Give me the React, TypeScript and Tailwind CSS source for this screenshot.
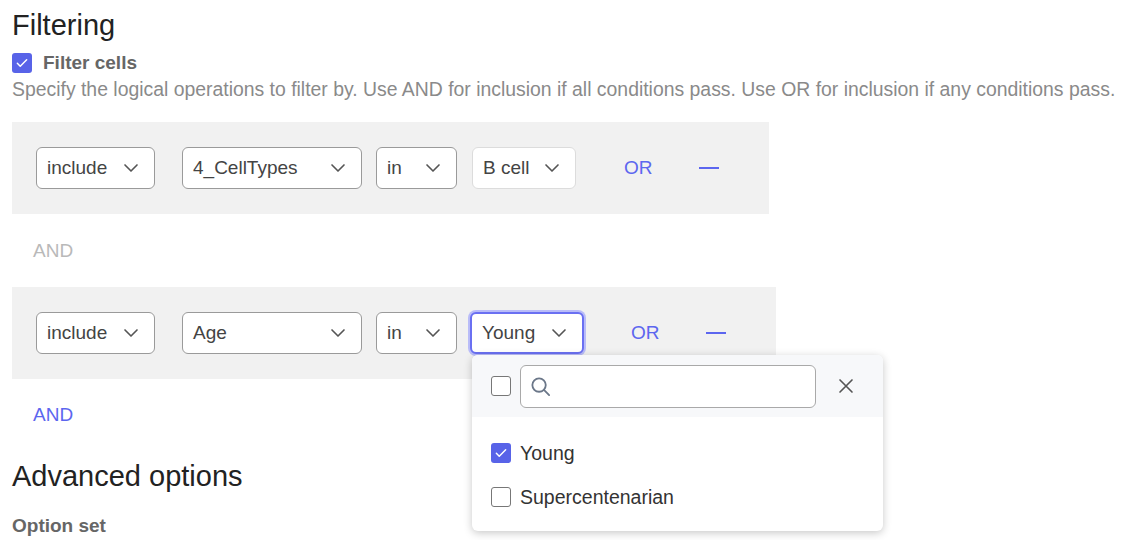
import { useState } from "react";

type Cond = { mode: string; field: string; op: string; value: string };

const font = { fontFamily: '"Liberation Sans", Arial, sans-serif' };

function Chevron() {
  return (
    <svg width="18" height="18" viewBox="0 0 24 24" fill="none" stroke="#555" strokeWidth="2.2" strokeLinecap="round" strokeLinejoin="round">
      <path d="M4 8l8 8 8-8" />
    </svg>
  );
}

function Select({ value, w, focused, soft }: { value: string; w: string; focused?: boolean; soft?: boolean }) {
  const border = focused
    ? "border-2 border-[#6a70f2] ring-2 ring-[#b9bcf8]"
    : soft
      ? "border border-[#dcdcdc]"
      : "border border-[#9a9a9a]";
  return (
    <div className={`flex h-[42px] ${w} items-center justify-between rounded-md bg-white pl-[10px] pr-[14px] text-[19px] text-[#444] ${border}`}>
      <span>{value}</span>
      <Chevron />
    </div>
  );
}

function Box({ checked }: { checked?: boolean }) {
  return checked ? (
    <span className="flex h-[20px] w-[20px] shrink-0 items-center justify-center rounded-[3px] bg-[#5863e8]">
      <svg width="14" height="14" viewBox="0 0 24 24" fill="none" stroke="white" strokeWidth="2.5" strokeLinecap="round" strokeLinejoin="round">
        <path d="M4 12.5l5 5L20 6.5" />
      </svg>
    </span>
  ) : (
    <span className="h-[20px] w-[20px] shrink-0 rounded-[3px] border border-[#777] bg-white" />
  );
}

function ValuePicker() {
  return (
    <div className="absolute left-[2px] top-[43px] z-10 w-[411px] overflow-hidden rounded-md bg-white shadow-[0_2px_8px_rgba(0,0,0,0.22)]">
      <div className="flex h-[62px] items-center bg-[#f7f8fa] pl-[19px] pr-[28px]">
        <Box />
        <div className="ml-[9px] flex h-[43px] w-[296px] items-center rounded-md border border-[#a9a9a9] bg-white pl-[8px]">
          <svg width="23" height="23" viewBox="0 0 24 24" fill="none" stroke="#6b7789" strokeWidth="1.9" strokeLinecap="round">
            <circle cx="10.5" cy="10.5" r="7" />
            <path d="M15.6 15.6L21 21" />
          </svg>
        </div>
        <svg className="ml-auto" width="18" height="18" viewBox="0 0 24 24" fill="none" stroke="#555" strokeWidth="2.2" strokeLinecap="round">
          <path d="M4 4l16 16M20 4L4 20" />
        </svg>
      </div>
      <div className="flex flex-col gap-[24px] pb-[24px] pl-[19px] pt-[26px] text-[19.5px] leading-[20px] text-[#333]">
        <label className="flex h-[20px] items-center gap-[9px]">
          <Box checked />
          <span>Young</span>
        </label>
        <label className="flex h-[20px] items-center gap-[9px]">
          <Box />
          <span>Supercentenarian</span>
        </label>
      </div>
    </div>
  );
}

function ConditionRow({ c, open }: { c: Cond; open?: boolean }) {
  return (
    <div className="inline-flex items-center bg-[#f1f1f1] pb-[25px] pl-[24px] pr-[50px] pt-[25px]">
      <Select value={c.mode} w="w-[119px]" />
      <div className="ml-[27px]">
        <Select value={c.field} w="w-[180px]" />
      </div>
      <div className="ml-[14px]">
        <Select value={c.op} w="w-[81px]" />
      </div>
      {open ? (
        <div className="relative ml-[13px]">
          <Select value={c.value} w="w-[114px]" focused />
          <ValuePicker />
        </div>
      ) : (
        <div className="ml-[15px]">
          <Select value={c.value} w="w-[104px]" soft />
        </div>
      )}
      <button className={`${open ? "ml-[32px]" : "ml-[33px]"} px-[15px] text-[19px] text-[#5c66ef]`}>OR</button>
      <span className="ml-[31px] h-[2px] w-[20px] bg-[#5c66ef]" />
    </div>
  );
}

export default function App() {
  const [conds] = useState<Cond[]>([
    { mode: "include", field: "4_CellTypes", op: "in", value: "B cell" },
    { mode: "include", field: "Age", op: "in", value: "Young" },
  ]);

  return (
    <div className="h-[540px] overflow-hidden bg-white pl-[12px] pt-[6px]" style={font}>
      <h1 className="text-[29px] leading-[38px] text-[#222]">Filtering</h1>
      <label className="mt-[9px] flex h-[20px] items-center gap-[11px]">
        <Box checked />
        <span className="text-[19px] font-bold text-[#666]">Filter cells</span>
      </label>
      <p className="mt-[5px] text-[19.4px] leading-[22px] text-[#8a8a8a]">
        Specify the logical operations to filter by. Use AND for inclusion if all conditions pass. Use OR for inclusion if any conditions pass.
      </p>
      <div className="mt-[22px] flex">
        <ConditionRow c={conds[0]} />
      </div>
      <div className="pb-[25px] pl-[21px] pt-[26px] text-[19px] leading-[22px] text-[#b9b9b9]">AND</div>
      <div className="flex">
        <ConditionRow c={conds[1]} open />
      </div>
      <div className="pl-[21px] pt-[25px] text-[19px] leading-[22px] text-[#5c66ef]">AND</div>
      <h2 className="mt-[33px] text-[29px] leading-[34px] text-[#222]">Advanced options</h2>
      <div className="mt-[22px] text-[19px] font-bold leading-[22px] text-[#666]">Option set</div>
    </div>
  );
}
